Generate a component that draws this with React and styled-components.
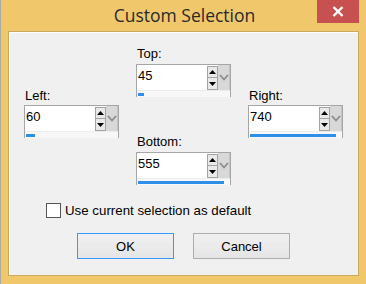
import React from 'react';
import styled, { createGlobalStyle } from 'styled-components';

const GlobalStyle = createGlobalStyle`
  html, body {
    margin: 0;
    padding: 0;
    width: 366px;
    height: 284px;
    overflow: hidden;
    font-family: "Liberation Sans", Arial, sans-serif;
  }
`;

const fields = {
  top: { label: 'Top:', value: '45', fill: 0.07 },
  left: { label: 'Left:', value: '60', fill: 0.1 },
  right: { label: 'Right:', value: '740', fill: 0.935 },
  bottom: { label: 'Bottom:', value: '555', fill: 0.935 },
};

const Window = styled.div`
  width: 366px;
  height: 284px;
  box-sizing: border-box;
  background: #f0c86b;
  border-left: 1px solid #a9a9a6;
  display: flex;
  flex-direction: column;
`;

const TitleBar = styled.div`
  height: 31px;
  position: relative;
  display: flex;
  justify-content: center;
  align-items: flex-start;
`;

const Title = styled.div`
  font-family: "Open Sans", "Noto Sans", sans-serif;
  font-size: 17.5px;
  line-height: 30px;
  color: #2a2a2a;
  margin-left: 2px;
`;

const CloseButton = styled.div`
  position: absolute;
  top: 0;
  right: 7px;
  width: 42px;
  height: 23px;
  background: #c75050;
  display: flex;
  align-items: center;
  justify-content: center;
`;

const Panel = styled.div`
  flex: 1;
  margin: 0 7px 8px 7px;
  border: 1px solid #c9a95c;
  box-shadow: inset 1px 1px 0 #ffffff;
  background: #f0f0f0;
  display: flex;
  flex-direction: column;
  align-items: stretch;
  padding: 14px 0 0 0;
`;

const FieldGrid = styled.div`
  display: flex;
  gap: 17px;
  padding-left: 15px;
  align-items: flex-start;
`;

const Column = styled.div`
  display: flex;
  flex-direction: column;
  margin-top: ${(p) => p.$offset || 0}px;
  gap: ${(p) => p.$gap || 0}px;
`;

const FieldWrap = styled.div`
  width: 95px;
  display: flex;
  flex-direction: column;
`;

const Label = styled.div`
  font-size: 13px;
  line-height: 16px;
  color: #000;
  margin-bottom: ${(p) => p.$space}px;
  padding-left: 1px;
`;

const SpinBox = styled.div`
  height: 33px;
  box-sizing: border-box;
  border: 1px solid #a6a6a6;
  background: #fff;
  display: flex;
  flex-direction: column;
`;

const EntryRow = styled.div`
  height: 25px;
  display: flex;
`;

const Entry = styled.div`
  flex: 1;
  font-size: 13px;
  line-height: 16px;
  padding: 3px 0 0 1px;
  color: #000;
`;

const Arrows = styled.div`
  width: 11px;
  display: flex;
  flex-direction: column;
  padding-top: 1px;
`;

const ArrowButton = styled.div`
  height: 12px;
  box-sizing: border-box;
  border: 1px solid #a3a3a3;
  border-top: ${(p) => (p.$down ? 'none' : '1px solid #a3a3a3')};
  background: #e9e9e9;
  display: flex;
  align-items: center;
  justify-content: center;
`;

const Drop = styled.div`
  width: 12px;
  height: 25px;
  box-sizing: border-box;
  background: #d8d8d8;
  border-right: 1px solid #c4c4c4;
  display: flex;
  align-items: center;
  justify-content: center;
`;

const Track = styled.div`
  flex: 1;
  background: #f7f7f7;
  padding: 2px 0 1px 1px;
  border-top: 1px solid #ececec;
`;

const Bar = styled.div`
  height: 3px;
  background: #2f8ee8;
`;

const Arrow = ({ down }) => (
  <svg width="7" height="4" viewBox="0 0 7 4">
    <polygon points={down ? '0,0 7,0 3.5,4' : '0,4 7,4 3.5,0'} fill="#000" />
  </svg>
);

const Field = ({ label, value, fill, labelSpace = 2 }) => (
  <FieldWrap>
    <Label $space={labelSpace}>{label}</Label>
    <SpinBox>
      <EntryRow>
        <Entry>{value}</Entry>
        <Arrows>
          <ArrowButton>
            <Arrow />
          </ArrowButton>
          <ArrowButton $down>
            <Arrow down />
          </ArrowButton>
        </Arrows>
        <Drop>
          <svg width="10" height="7" viewBox="0 0 10 7">
            <polyline points="1,1 5,5.5 9,1" fill="none" stroke="#8c8c8c" strokeWidth="1.8" />
          </svg>
        </Drop>
      </EntryRow>
      <Track>
        <Bar style={{ width: `${fill * 100}%` }} />
      </Track>
    </SpinBox>
  </FieldWrap>
);

const CheckRow = styled.label`
  display: flex;
  align-items: center;
  gap: 4px;
  margin: 18px 0 0 37px;
  font-size: 13.3px;
  color: #000;
`;

const CheckBox = styled.span`
  width: 15px;
  height: 15px;
  box-sizing: border-box;
  border: 1px solid #555;
  background: #fff;
`;

const ButtonRow = styled.div`
  display: flex;
  justify-content: center;
  gap: 19px;
  margin-top: 15px;
`;

const Button = styled.div`
  width: 97px;
  height: 26px;
  box-sizing: border-box;
  border: 1px solid ${(p) => (p.$default ? '#3399ff' : '#adadad')};
  background: linear-gradient(#f0f0f0, #e5e5e5);
  font-size: 13px;
  display: flex;
  align-items: center;
  justify-content: center;
  color: #000;
`;

export default function App() {
  return (
    <>
      <GlobalStyle />
      <Window>
        <TitleBar>
          <Title>Custom Selection</Title>
          <CloseButton>
            <svg width="12" height="11" viewBox="0 0 12 11">
              <path d="M1.5 1 L10.5 10 M10.5 1 L1.5 10" stroke="#fff" strokeWidth="2.4" />
            </svg>
          </CloseButton>
        </TitleBar>
        <Panel>
          <FieldGrid>
            <Column $offset={42}>
              <Field {...fields.left} labelSpace={1} />
            </Column>
            <Column $gap={37}>
              <Field {...fields.top} />
              <Field {...fields.bottom} />
            </Column>
            <Column $offset={42}>
              <Field {...fields.right} labelSpace={1} />
            </Column>
          </FieldGrid>
          <CheckRow>
            <CheckBox />
            Use current selection as default
          </CheckRow>
          <ButtonRow>
            <Button $default>OK</Button>
            <Button>Cancel</Button>
          </ButtonRow>
        </Panel>
      </Window>
    </>
  );
}
